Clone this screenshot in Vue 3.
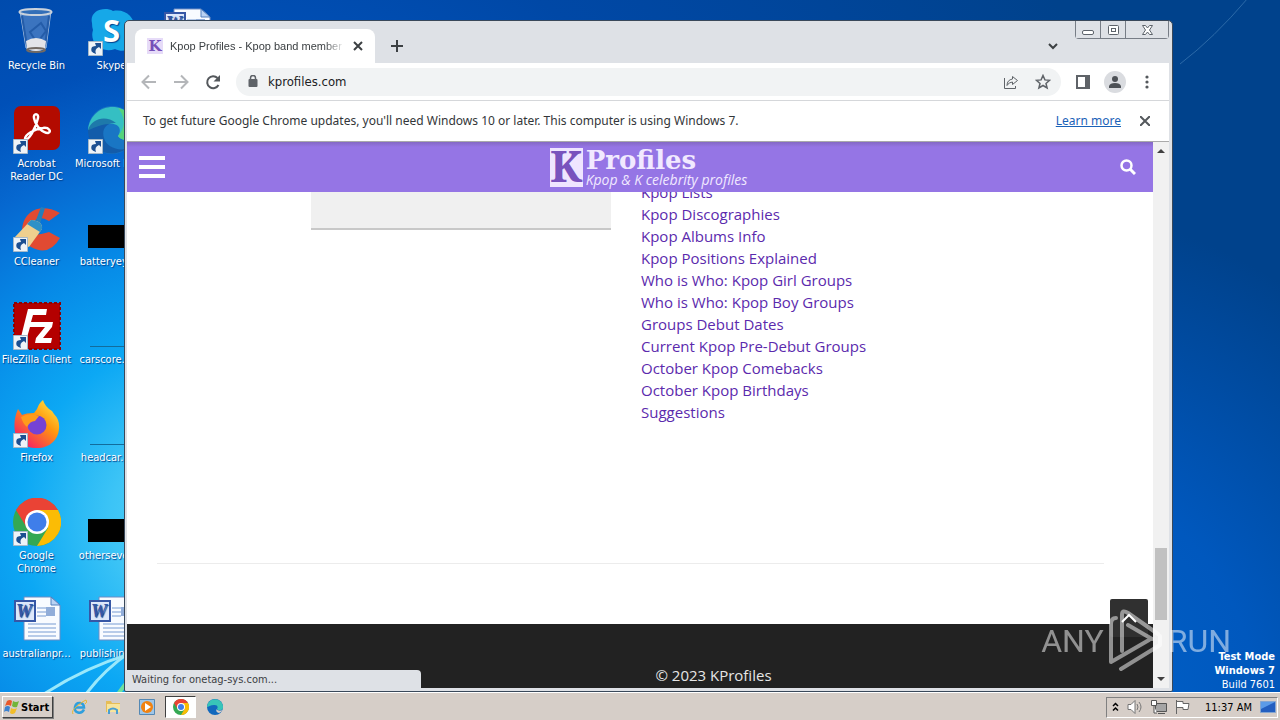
<template>
  <div class="screen">
    <main class="desktop">
      <svg class="streaks-left" viewBox="0 0 130 80" aria-hidden="true">
        <path d="M44 82Q84 56 130 42" />
        <path d="M86 82Q104 58 130 40" />
        <path class="green" d="M118 82L130 66" />
      </svg>
      <svg class="streaks-right" viewBox="0 0 100 70" aria-hidden="true">
        <path d="M0 64Q34 38 68-2" />
      </svg>

      <ul class="shortcuts">
        <li v-for="(item, index) in shortcuts" :key="index" class="shortcut">
          <span class="shortcut-icon">
            <svg v-if="item.icon === 'bin'" viewBox="0 0 48 48">
              <path d="M7 3h31l-5 37q-10 5-20 0z" fill="#4f82c4" fill-opacity=".75" stroke="#9db9dc" />
              <path d="M9 8l5 30M36 8l-4 30M17 24l11-9 5 8-9 12z" fill="none" stroke="#245ca8" stroke-width="2" />
              <path d="M13 33q10-6 20 0l-1 8q-9 4-18 0z" fill="#e3e4e8" />
              <ellipse cx="22.500" cy="4" rx="16" ry="3" fill="#336fb8" stroke="#c9d2dc" stroke-width="2" />
              <ellipse cx="23" cy="42" rx="9" ry="2" fill="none" stroke="#726a63" stroke-width="2" />
            </svg>
            <svg v-else-if="item.icon === 'skype'" viewBox="0 0 48 48">
              <path d="M4 15C1 3 16-2 25 3c16-3 26 12 20 25 3 12-8 18-18 13C13 46 1 34 5 22q-1-3-1-7z" fill="#16a8e8" />
              <text x="15" y="34" class="skype-letter">S</text>
            </svg>
            <svg v-else-if="item.icon === 'acrobat'" viewBox="0 0 48 48">
              <rect x="1" y="0" width="46" height="44" rx="7" fill="#b30b00" />
              <path d="M12 33c3 3 11-11 13-21 1-5-5-5-4 0 2 9 9 15 14 15 4-1 1-6-5-5-8 1-18 6-18 11z" fill="none" stroke="#fff" stroke-width="2.500" />
            </svg>
            <svg v-else-if="item.icon === 'edge'" viewBox="0 0 48 48">
              <circle cx="24" cy="24" r="24" fill="#1976c4" />
              <path d="M0 24C2 5 20-3 34 3c13 5 17 21 12 28-5 5-14 3-16-1 5-8-1-13-9-12C11 18 3 24 0 24z" fill="#35bfc3" />
              <path d="M0 24C4 12 18 9 28 17c-9-1-15 6-12 15 2 8 12 13 22 11-14 10-38 3-38-19z" fill="#0f4b99" fill-opacity=".6" />
              <path d="M30 2c18 4 20 20 16 29-5 5-14 3-16-1 10-11 5-22 0-28z" fill="#55d37b" />
            </svg>
            <svg v-else-if="item.icon === 'ccleaner'" viewBox="0 0 48 48">
              <path d="M47 9L36 17q-13-8-17 5t17 6l11 6Q36 53 18 43C-2 29 14-9 47 9z" fill="#e14a32" />
              <path d="M28 3l4 1-7 22-5-2z" fill="#247fbb" />
              <path d="M18 16q12 1 11 9L16 43Q8 41 2 33z" fill="#efcf8e" />
              <path d="M18 16q12 1 11 9l-2 3-13-8z" fill="#2e91c7" />
            </svg>
            <svg v-else-if="item.icon === 'filezilla'" viewBox="0 0 48 48">
              <rect x="1" y="1" width="46" height="46" fill="#b40000" stroke="#8e0000" stroke-width="2" stroke-dasharray="3 2" />
              <path d="M15 7h19l-1 6H20l-2 7h11l-1 5H17l-4 14H7zM25 20h15l-1 5-9 11h9l-1 5H22l1-5 9-11h-8z" fill="#fff" />
            </svg>
            <svg v-else-if="item.icon === 'firefox'" viewBox="0 0 48 48">
              <defs>
                <linearGradient id="fox" x1="1" y1="0" x2="0.2" y2="1">
                  <stop offset="0" stop-color="#fff44f" />
                  <stop offset=".45" stop-color="#ff980e" />
                  <stop offset="1" stop-color="#f5156c" />
                </linearGradient>
              </defs>
              <path d="M5 9l4 6q4-2 12-2l3-4q2-6 6-9 2 7 9 11l2 3q6 6 5 15c-2 25-40 25-44 3Q0 20 5 9z" fill="url(#fox)" />
              <circle cx="24" cy="25" r="9.500" fill="#7542d5" />
              <path d="M8 17q9-5 18-1l-4 5q-5 0-8 6-4-3-6-10z" fill="#ff9b1a" />
            </svg>
            <svg v-else-if="item.icon === 'chrome'" viewBox="0 0 48 48">
              <circle cx="24" cy="24" r="24" fill="#34a853" />
              <path d="M3 12A24 24 0 0 1 45 12H24L14 30z" fill="#ea4335" />
              <path d="M24 12h21A24 24 0 0 1 24 48l11-18z" fill="#fbbc05" />
              <circle cx="24" cy="24" r="12" fill="#fff" />
              <circle cx="24" cy="24" r="9.500" fill="#3f7eea" />
            </svg>
            <svg v-else-if="item.icon === 'word'" viewBox="0 0 48 48">
              <path d="M11 1h27l9 8v35H11z" fill="#f8fbff" stroke="#6d8cc4" />
              <path d="M38 1v8h9z" fill="#b9d2f3" stroke="#5580bd" />
              <path d="M24 12h9M24 16h9M24 20h9M15 28h28M15 32h28M15 36h28M15 40h28" stroke="#779bd2" />
              <rect x="33" y="11" width="9" height="9" fill="#91add9" />
              <rect x="2" y="5" width="20" height="20" fill="#dce7fa" stroke="#3657a6" stroke-width="2" />
              <text x="3" y="21" class="word-letter">W</text>
            </svg>
            <svg v-else-if="item.icon === 'black'" viewBox="0 0 48 48">
              <path d="M0 21h48v23H0z" />
            </svg>
            <svg v-else viewBox="0 0 48 48">
              <path d="M2 44.500h46" stroke="#126c9c" />
            </svg>
            <svg v-if="item.arrow" class="link-arrow" viewBox="0 0 15 15">
              <path d="M.5.500h14v14H.5z" fill="#eef3f8" stroke="#a6b9c9" />
              <path d="M7 2h6v6l-2-2q-5 2-3 7Q1 11 4 6q2-1 4-1z" fill="#1c4f91" />
            </svg>
          </span>
          <span class="shortcut-label">{{ item.label }}</span>
        </li>
      </ul>

      <section class="window">
        <header class="titlebar">
          <div class="tab">
            <span class="favicon">K</span>
            <span class="tab-title">Kpop Profiles - Kpop band member profiles</span>
            <button class="plain" aria-label="Close tab">
              <svg width="10" height="10" viewBox="0 0 10 10"><path d="M1 1l8 8M9 1l-8 8" stroke="#3c4043" stroke-width="2" /></svg>
            </button>
          </div>
          <button class="plain new-tab" aria-label="New tab">
            <svg width="12" height="12" viewBox="0 0 12 12"><path d="M6 0v12M0 6h12" stroke="#3c4043" stroke-width="2" /></svg>
          </button>
          <button class="plain tab-search" aria-label="Search tabs">
            <svg width="10" height="7" viewBox="0 0 10 7"><path d="M1 1l4 4 4-4" fill="none" stroke="#3c4043" stroke-width="2" /></svg>
          </button>
          <div class="caption-buttons">
            <button aria-label="Minimize">
              <svg width="13" height="12" viewBox="0 0 13 12"><rect x=".5" y="6.500" width="11" height="4" rx="1.500" fill="#fff" stroke="#5d636b" /></svg>
            </button>
            <button aria-label="Maximize">
              <svg width="13" height="12" viewBox="0 0 13 12" fill="#fff" stroke="#5d636b"><rect x="1.500" y="1.500" width="10" height="9" rx="1" /><rect x="4.500" y="4.500" width="4" height="3" /></svg>
            </button>
            <button class="caption-close" aria-label="Close">
              <svg width="13" height="12" viewBox="0 0 13 12"><path d="M1.500 1.500h3l2 2.500 2-2.500h3L8.500 6l3 4.500h-3l-2-2.500-2 2.500h-3L4.500 6z" fill="#fff" stroke="#5d636b" /></svg>
            </button>
          </div>
        </header>

        <nav class="toolbar">
          <button class="plain" aria-label="Back">
            <svg width="16" height="16" viewBox="0 0 16 16"><path d="M15 8H2M8 1.500L1.500 8 8 14.500" fill="none" stroke="#b4b6b9" stroke-width="2" /></svg>
          </button>
          <button class="plain" aria-label="Forward">
            <svg width="16" height="16" viewBox="0 0 16 16"><path d="M1 8h13M8 1.500L14.500 8 8 14.500" fill="none" stroke="#b4b6b9" stroke-width="2" /></svg>
          </button>
          <button class="plain" aria-label="Reload">
            <svg width="16" height="16" viewBox="0 0 16 16"><path d="M13.500 11A6 6 0 1 1 12.500 4" fill="none" stroke="#54585c" stroke-width="2" /><path d="M15 1v6.500H8.500z" fill="#54585c" /></svg>
          </button>
          <div class="address">
            <svg width="10" height="13" viewBox="0 0 10 13"><rect y="4" x=".5" width="9" height="8" rx="1" fill="#5f6368" /><path d="M2.500 5V3a2.500 2.500 0 0 1 5 0v2" fill="none" stroke="#5f6368" stroke-width="1.500" /></svg>
            <input type="text" value="kprofiles.com" aria-label="Address">
            <button class="plain" aria-label="Share">
              <svg width="16" height="16" viewBox="0 0 16 16" fill="none" stroke="#5f6368"><path d="M1.500 4v10.500h11V12" /><path d="M9.500 2.500l5 4-5 4V8Q6 8 4 11.500 4 6 9.500 5z" /></svg>
            </button>
            <button class="plain" aria-label="Bookmark">
              <svg width="16" height="16" viewBox="0 0 16 16"><path d="M8 1.500l1.900 4.400 4.700.4-3.600 3.100 1.100 4.600L8 11.500 3.900 14 5 9.400 1.400 6.300l4.700-.4z" fill="none" stroke="#5f6368" stroke-width="1.500" /></svg>
            </button>
          </div>
          <button class="plain" aria-label="Side panel">
            <svg width="16" height="16" viewBox="0 0 16 16"><path d="M1 1h14v14H1z" fill="#5f6368" /><path d="M3 3h7v10H3z" fill="#fff" /></svg>
          </button>
          <button class="plain avatar" aria-label="Profile">
            <svg width="14" height="14" viewBox="0 0 14 14" fill="#4d5156"><circle cx="7" cy="4" r="3" /><path d="M1 13v-2q1-3 6-3t6 3v2z" /></svg>
          </button>
          <button class="plain" aria-label="Menu">
            <svg width="16" height="16" viewBox="0 0 16 16" fill="#54585c"><circle cx="8" cy="3" r="1.600" /><circle cx="8" cy="8" r="1.600" /><circle cx="8" cy="13" r="1.600" /></svg>
          </button>
        </nav>

        <div class="infobar">
          <p>To get future Google Chrome updates, you'll need Windows 10 or later. This computer is using Windows 7.</p>
          <a href="#">Learn more</a>
          <button class="plain" aria-label="Dismiss">
            <svg width="10" height="10" viewBox="0 0 10 10"><path d="M0 0l10 10M10 0L0 10" stroke="#54585c" stroke-width="2" /></svg>
          </button>
        </div>

        <div class="viewport">
          <div class="page">
            <header class="site-header">
              <button class="plain" aria-label="Open menu">
                <svg width="26" height="22" viewBox="0 0 26 22"><path d="M0 2h26M0 11h26M0 20h26" stroke="#fff" stroke-width="4" /></svg>
              </button>
              <a class="logo" href="#">
                <span class="logo-k">K</span>
                <span class="logo-text">
                  <strong>Profiles</strong>
                  <em>Kpop &amp; K celebrity profiles</em>
                </span>
              </a>
              <button class="plain" aria-label="Search">
                <svg width="16" height="16" viewBox="0 0 16 16" fill="none" stroke="#fff"><circle cx="6.500" cy="6.500" r="5" stroke-width="2.500" /><path d="M10 10l5 5" stroke-width="3" /></svg>
              </button>
            </header>
            <div class="content">
              <div class="widgets">
                <div class="ad"></div>
                <ul class="links">
                  <li v-for="link in links" :key="link"><a href="#">{{ link }}</a></li>
                </ul>
              </div>
              <hr>
            </div>
            <footer class="site-footer">© 2023 KProfiles</footer>
            <button class="to-top" aria-label="Back to top">
              <svg width="16" height="10" viewBox="0 0 16 10"><path d="M1 9l7-7 7 7" fill="none" stroke="#fff" stroke-width="2" /></svg>
            </button>
          </div>
          <div class="scrollbar">
            <svg width="8" height="4" viewBox="0 0 8 4"><path d="M0 4l4-4 4 4z" fill="#404040" /></svg>
            <div class="thumb"></div>
            <svg width="8" height="4" viewBox="0 0 8 4"><path d="M0 0l4 4 4-4z" fill="#404040" /></svg>
          </div>
        </div>
        <div class="status">Waiting for onetag-sys.com...</div>
      </section>

      <div class="build-info">
        <strong>Test Mode</strong>
        <strong>Windows 7</strong>
        <span>Build 7601</span>
      </div>
    </main>

    <footer class="taskbar">
      <button class="start">
        <svg width="16" height="16" viewBox="0 0 16 16">
          <path d="M3 2q3-2 5 0L7 7Q4 5 1 7z" fill="#e8582b" />
          <path d="M9 2q3 2 6 0l-2 6q-3 1-5-1z" fill="#72b53a" />
          <path d="M1 8q3-2 5 0l-1 5q-3-2-5 0z" fill="#3c82d0" />
          <path d="M7 9q3 2 6 0l-2 5q-3 2-5 0z" fill="#f2bd28" />
        </svg>
        Start
      </button>
      <div class="quick">
        <button aria-label="Internet Explorer">
          <svg viewBox="0 0 16 16"><path d="M13 10.500q-2 4-6 3-4-1-3-5.500t5-4 4 4.500H5" fill="none" stroke="#2f9fdd" stroke-width="2.500" /><path d="M2 15q-2-3 4-8t9-6q2 2-1 4" fill="none" stroke="#e8b72e" /></svg>
        </button>
        <button aria-label="Explorer">
          <svg viewBox="0 0 16 16"><path d="M1 2h5l1 2h8v9H1z" fill="#e6bd57" /><path d="M2 5h13v8H2z" fill="#f8e49b" /><path d="M4 15v-4q4-3 8 0v4" fill="none" stroke="#4a9fd1" stroke-width="2" /></svg>
        </button>
        <button aria-label="Media Player">
          <svg viewBox="0 0 16 16"><path d="M.5.500h15v15H.5z" fill="#9fc6e8" stroke="#5488b4" /><circle cx="8" cy="8" r="6" fill="#f18210" /><path d="M6 4l6 4-6 4z" fill="#fff" /></svg>
        </button>
        <button class="active" aria-label="Chrome">
          <svg viewBox="0 0 48 48"><circle cx="24" cy="24" r="24" fill="#34a853" /><path d="M3 12A24 24 0 0 1 45 12H24L14 30z" fill="#ea4335" /><path d="M24 12h21A24 24 0 0 1 24 48l11-18z" fill="#fbbc05" /><circle cx="24" cy="24" r="12" fill="#fff" /><circle cx="24" cy="24" r="9" fill="#3f7eea" /></svg>
        </button>
        <button aria-label="Edge">
          <svg viewBox="0 0 48 48"><circle cx="24" cy="24" r="24" fill="#1268bd" /><path d="M0 24C2 5 20-3 34 3c13 5 17 21 12 28-5 5-14 3-16-1 5-8-1-13-9-12C11 18 3 24 0 24z" fill="#38c4b8" /><path d="M28 31q5 6 18 3-4 7-10 8-10-2-8-11z" fill="#d6cec8" /></svg>
        </button>
      </div>
      <div class="tray">
        <svg width="7" height="10" viewBox="0 0 7 10"><path d="M1 4l2.500-2.500L6 4M1 8.500L3.500 6 6 8.500" fill="none" stroke="#000" stroke-width="1.500" /></svg>
        <svg width="16" height="16" viewBox="0 0 16 16"><path d="M1 5.500h3l4-4v13l-4-4H1z" fill="#fff" stroke="#747474" /><path d="M10 5q2 3 0 6M12 3q4 5 0 10" fill="none" stroke="#777" /></svg>
        <svg width="16" height="16" viewBox="0 0 16 16"><path d="M4.500 4.500h11v8h-11zM7 14.500h7" fill="#a5a5a5" stroke="#555" /><path d="M.5 1.500h5v5h-5zM3 7v7h3" fill="#fff" stroke="#555" /></svg>
        <svg width="16" height="16" viewBox="0 0 16 16"><path d="M1.500 1v14M2 2.500h6v2h6l-1 6H8v-2H2" fill="#fff" stroke="#666" /></svg>
        <time>11:37 AM</time>
        <svg width="16" height="12" viewBox="0 0 16 12"><path d="M.5.500h15v11H.5z" fill="#235fc0" stroke="#84a6d1" /><path d="M1 1h14L1 8z" fill="#5b9be8" /></svg>
      </div>
    </footer>

    <div class="watermark" aria-hidden="true">
      <span>ANY</span>
      <svg width="56" height="64" viewBox="0 0 56 64" fill="none" stroke="#fff" stroke-width="4" stroke-linejoin="round" stroke-linecap="round">
        <path d="M14 42V6Q14 0 20 4L50 25M20 16L44 30" />
        <path d="M8 9q-5 0-5 6v38l38-22M13 60L52 36V27" />
      </svg>
      <span>RUN</span>
    </div>
  </div>
</template>

<script setup>
const shortcuts = [
  { label: 'Recycle Bin', icon: 'bin' },
  { label: 'Acrobat\nReader DC', icon: 'acrobat', arrow: true },
  { label: 'CCleaner', icon: 'ccleaner', arrow: true },
  { label: 'FileZilla Client', icon: 'filezilla', arrow: true },
  { label: 'Firefox', icon: 'firefox', arrow: true },
  { label: 'Google\nChrome', icon: 'chrome', arrow: true },
  { label: 'australianpr...', icon: 'word' },
  { label: 'Skype', icon: 'skype', arrow: true },
  { label: 'Microsoft Edge', icon: 'edge', arrow: true },
  { label: 'batteryeye...', icon: 'black' },
  { label: 'carscore.png', icon: 'line' },
  { label: 'headcar.png', icon: 'line' },
  { label: 'otherseven...', icon: 'black' },
  { label: 'publishingr...', icon: 'word' },
  { label: '', icon: 'word' }
]

const links = [
  'Kpop Lists',
  'Kpop Discographies',
  'Kpop Albums Info',
  'Kpop Positions Explained',
  'Who is Who: Kpop Girl Groups',
  'Who is Who: Kpop Boy Groups',
  'Groups Debut Dates',
  'Current Kpop Pre-Debut Groups',
  'October Kpop Comebacks',
  'October Kpop Birthdays',
  'Suggestions'
]
</script>

<style>
body {
  margin: 0;
  overflow: hidden;
}
</style>

<style scoped>
* {
  box-sizing: border-box;
}

.screen {
  position: relative;
  display: flex;
  flex-direction: column;
  height: 100vh;
  font-family: "DejaVu Sans Condensed", "DejaVu Sans", Tahoma, sans-serif;
  font-size: 11px;
  line-height: 13px;
}

ul {
  list-style: none;
  margin: 0;
  padding: 0;
}

svg {
  display: block;
  flex: none;
}

button {
  font: inherit;
}

.plain {
  display: flex;
  align-items: center;
  justify-content: center;
  flex: none;
  padding: 0;
  border: 0;
  background: none;
}

/* Desktop */
.desktop {
  position: relative;
  flex: 1;
  min-height: 0;
  overflow: hidden;
  background:
    radial-gradient(circle at 1000px 720px, #0064cc 0, #0058be 260px, rgba(0, 80, 176, 0) 520px),
    radial-gradient(circle at 200px 520px, #5cd6f8 0, #3cc4f6 90px, #0ca8f4 180px, #0688e6 280px, #0668d0 370px, #0050b8 460px, #0048a6 620px, #00428c 1000px);
}

.streaks-left {
  position: absolute;
  left: 0;
  bottom: 0;
  width: 130px;
  fill: none;
  stroke: #9ae8fb;
  stroke-width: 3px;
}

.streaks-left .green {
  stroke: #6ee0a0;
  stroke-width: 4px;
}

.streaks-right {
  position: absolute;
  top: 0;
  right: 0;
  width: 100px;
  fill: none;
  stroke: #2c6aa8;
}

.shortcuts {
  display: grid;
  grid-auto-flow: column;
  grid-template-rows: repeat(7, 98px);
  grid-auto-columns: 75px;
  margin-left: -1px;
  padding-top: 8px;
}

.shortcut {
  display: flex;
  flex-direction: column;
  align-items: center;
  color: #fff;
  text-align: center;
  text-shadow: 1px 1px 1px #00408c;
}

.shortcut-icon {
  position: relative;
  width: 48px;
  height: 48px;
  margin-bottom: 3px;
}

.shortcut-label {
  white-space: pre;
}

.link-arrow {
  position: absolute;
  left: 0;
  bottom: 0;
  width: 15px;
}

.skype-letter {
  font: bold 31px "Open Sans", sans-serif;
  fill: #fff;
}

.word-letter {
  font: italic bold 18px "Liberation Serif", serif;
  fill: #3657a6;
}

/* Browser window */
.window {
  position: absolute;
  top: 20px;
  right: 107px;
  bottom: 0;
  left: 124px;
  display: flex;
  flex-direction: column;
  padding: 0 3px 3px 2px;
  border: 1px solid #39485a;
  border-radius: 5px 5px 2px 2px;
  background: #dee1e6;
}

.titlebar {
  display: flex;
  align-items: flex-end;
  height: 42px;
  padding-left: 8px;
}

.tab {
  display: flex;
  align-items: center;
  width: 240px;
  height: 34px;
  padding: 0 12px;
  border-radius: 8px 8px 0 0;
  background: #fff;
  color: #3c4043;
}

.favicon {
  width: 16px;
  height: 16px;
  margin-right: 7px;
  background: #e6dbf8;
  color: #7650b8;
  font: bold 15px/16px "DejaVu Serif", serif;
  text-align: center;
}

.tab-title {
  flex: 1;
  overflow: hidden;
  margin-right: 8px;
  font-family: "Liberation Sans", Arial, sans-serif;
  font-size: 11px;
  white-space: nowrap;
  mask-image: linear-gradient(to right, #000 88%, transparent);
}

.new-tab {
  width: 28px;
  height: 34px;
  margin-left: 8px;
}

.tab-search {
  width: 28px;
  height: 34px;
  margin-left: auto;
}

.caption-buttons {
  display: flex;
  align-self: flex-start;
  height: 18px;
  margin-left: 8px;
  border: 1px solid #777d86;
  border-top: 0;
  border-radius: 0 0 4px 4px;
}

.caption-buttons button {
  display: flex;
  align-items: center;
  justify-content: center;
  width: 25px;
  padding: 0;
  border: 0;
  border-right: 1px solid #777d86;
  background: #dee1e6;
}

.caption-buttons .caption-close {
  width: 42px;
  border: 0;
}

.toolbar {
  display: flex;
  align-items: center;
  gap: 16px;
  height: 38px;
  padding: 0 14px;
  border-bottom: 1px solid #d5d7da;
  background: #fff;
}

.address {
  display: flex;
  flex: 1;
  align-items: center;
  gap: 16px;
  height: 28px;
  margin-right: -2px;
  margin-left: -1px;
  padding: 0 10px 0 12px;
  border-radius: 14px;
  background: #f1f3f4;
}

.address input {
  flex: 1;
  min-width: 0;
  margin-left: -6px;
  padding: 0;
  border: 0;
  background: none;
  color: #202124;
  font: inherit;
  font-size: 13px;
}

.avatar {
  width: 22px;
  height: 22px;
  margin: 0 -3px;
  border-radius: 50%;
  background: #dadce0;
}

.infobar {
  display: flex;
  align-items: center;
  height: 41px;
  padding: 0 19px 0 16px;
  border-bottom: 1px solid #aaa;
  background: #fff;
  color: #333639;
  font-family: "Noto Sans", sans-serif;
  font-size: 12px;
  line-height: 16px;
}

.infobar p {
  flex: 1;
  margin: 0;
}

.infobar a {
  margin-right: 19px;
  color: #1a62b8;
}

.viewport {
  display: flex;
  flex: 1;
  min-height: 0;
}

.page {
  position: relative;
  display: flex;
  flex: 1;
  flex-direction: column;
  background: #fff;
  font-family: "Open Sans", sans-serif;
  font-size: 15px;
}

.site-header {
  display: flex;
  align-items: center;
  justify-content: space-between;
  height: 50px;
  padding: 0 17px 0 12px;
  background: linear-gradient(#8468c4, #9575e5 5px);
}

.logo {
  display: flex;
  align-items: center;
  gap: 3px;
  margin-left: 12px;
  color: #f1e9ff;
  text-decoration: none;
}

.logo-k {
  width: 33px;
  height: 39px;
  background: #efe5ff;
  color: #7952bd;
  font: bold 44px/34px "Noto Serif", "DejaVu Serif Condensed", serif;
  text-align: center;
}

.logo-text {
  display: flex;
  flex-direction: column;
}

.logo strong {
  font: bold 26px/26px "DejaVu Serif", serif;
}

.logo em {
  font-size: 14px;
  line-height: 14px;
}

.content {
  display: flex;
  flex: 1;
  flex-direction: column;
  justify-content: space-between;
  min-height: 0;
  overflow: hidden;
  padding: 0 49px 60px 30px;
}

.widgets {
  display: grid;
  grid-template-columns: 300px 328px;
  gap: 30px;
  align-self: center;
  margin-left: 19px;
}

.ad {
  height: 38px;
  border-bottom: 2px solid #c8c8c8;
  background: #f0f0f0;
}

.links {
  margin-top: -11px;
}

.links li {
  line-height: 22px;
}

.links a {
  color: #5b2aad;
  text-decoration: none;
}

hr {
  width: 100%;
  height: 1px;
  margin: 0;
  border: 0;
  background: #ececec;
}

.site-footer {
  height: 64px;
  padding-top: 40px;
  padding-left: 147px;
  background: #222;
  color: #e6e6e6;
  line-height: 22px;
  text-align: center;
}

.to-top {
  position: absolute;
  right: 5px;
  bottom: 51px;
  display: flex;
  align-items: center;
  justify-content: center;
  width: 38px;
  height: 38px;
  padding: 0;
  border: 0;
  border-radius: 2px;
  background: #303030;
}

.scrollbar {
  display: flex;
  flex-direction: column;
  align-items: center;
  width: 16px;
  padding: 7px 0;
  background: #f1f1f1;
}

.thumb {
  width: 12px;
  height: 72px;
  margin: auto 0 57px;
  background: #c1c1c1;
}

.status {
  position: absolute;
  bottom: 2px;
  left: 2px;
  width: 294px;
  height: 19px;
  padding: 0 5px;
  border-radius: 0 4px 0 0;
  background: #dee1e6;
  color: #3c4043;
  line-height: 19px;
}

.build-info {
  position: absolute;
  right: 5px;
  bottom: 0;
  display: flex;
  flex-direction: column;
  color: #fff;
  line-height: 14px;
  text-align: right;
}

/* Taskbar */
.taskbar {
  display: flex;
  align-items: center;
  height: 28px;
  padding: 1px 2px 0;
  border-top: 1px solid #fff;
  background: #d6cec8;
}

.start {
  display: flex;
  align-items: center;
  gap: 1px;
  height: 22px;
  padding: 0 3px 0 1px;
  border: 1px solid;
  border-color: #fff #404040 #404040 #fff;
  background: #d6cec8;
  box-shadow: 1px 1px #808080;
  color: #000;
  font-size: 11px;
  font-weight: bold;
}

.quick {
  display: flex;
  gap: 3px;
  margin-left: 10px;
}

.quick button {
  display: flex;
  align-items: center;
  justify-content: center;
  width: 31px;
  height: 22px;
  padding: 0;
  border: 1px solid transparent;
  background: none;
}

.quick .active {
  border-color: #404040 #fff #fff #404040;
  background: #fff;
}

.quick svg {
  width: 16px;
  height: 16px;
}

.tray {
  display: flex;
  align-items: center;
  gap: 8px;
  height: 21px;
  margin-left: auto;
  padding: 0 1px 0 5px;
  border: 1px solid;
  border-color: #808080 #fff #fff #808080;
  color: #000;
}

.tray time {
  margin-left: 6px;
}

/* Watermark */
.watermark {
  position: absolute;
  right: 49px;
  bottom: 47px;
  display: flex;
  align-items: center;
  gap: 4px;
  color: #fff;
  font: 32px/64px Roboto, sans-serif;
  opacity: 0.5;
  pointer-events: none;
}
</style>
